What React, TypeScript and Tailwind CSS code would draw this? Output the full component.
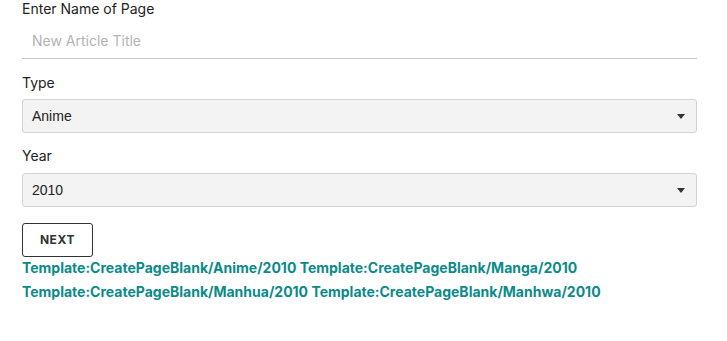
import React from 'react';

const links = [
  ['Template:CreatePageBlank/Anime/2010', 'Template:CreatePageBlank/Manga/2010'],
  ['Template:CreatePageBlank/Manhua/2010', 'Template:CreatePageBlank/Manhwa/2010'],
];

function Caret() {
  return (
    <svg width="8" height="5" viewBox="0 0 8 5" className="text-[#333]">
      <path d="M0 0h8L4 5z" fill="currentColor" />
    </svg>
  );
}

function SelectBox({ value }: { value: string }) {
  return (
    <div className="flex h-[34px] items-center justify-between rounded-[3px] border border-[#d2d3d2] bg-[#f2f3f2] pl-[9px] pr-[11px] font-['Liberation_Sans',sans-serif] text-[14px] text-[#222]">
      <span>{value}</span>
      <Caret />
    </div>
  );
}

export default function App() {
  return (
    <div className="min-h-[341px] bg-white font-['Inter',sans-serif] text-[#232323]">
      <div className="w-[675px] pl-[22px] box-content">
        {/* Page name */}
        <div className="text-[14px] leading-[17px]">Enter Name of Page</div>
        <div className="h-[42px] border-b border-[#c8c8c8] pl-[10px] pt-[15px] text-[14px] leading-[17px] text-[#b3b3b3]">
          New Article Title
        </div>

        {/* Type */}
        <div className="mt-[15px] text-[14px] leading-[17px]">Type</div>
        <div className="mt-[8px]">
          <SelectBox value="Anime" />
        </div>

        {/* Year */}
        <div className="mt-[14px] text-[14px] leading-[17px]">Year</div>
        <div className="mt-[9px]">
          <SelectBox value="2010" />
        </div>

        <button className="mt-[16px] flex h-[34px] w-[71px] items-center justify-center rounded-[3px] border border-[#333] bg-white text-[12px] font-bold tracking-[0.6px] text-[#333]">
          NEXT
        </button>

        <div className="-mt-[1px] text-[14px] font-bold leading-[24px] text-[#0b8a8a]">
          {links.map((row, i) => (
            <div key={i}>
              {row.map((l, j) => (
                <span key={j}>
                  {j > 0 ? ' ' : ''}
                  <a href="#">{l}</a>
                </span>
              ))}
            </div>
          ))}
        </div>
      </div>
    </div>
  );
}
